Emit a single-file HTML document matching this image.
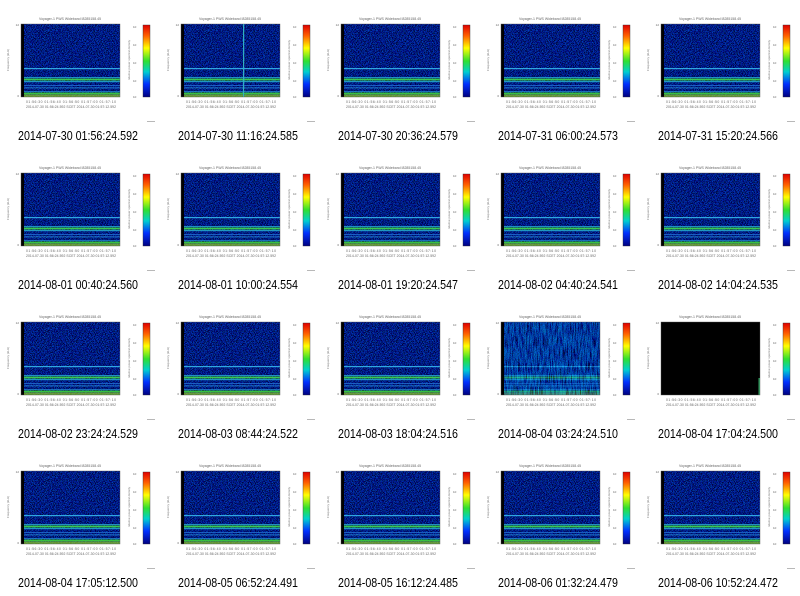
<!DOCTYPE html>
<html><head><meta charset="utf-8"><style>html,body{margin:0;padding:0;background:#fff;}svg{display:block}</style></head>
<body>
<svg width="800" height="596" viewBox="0 0 800 596" xmlns="http://www.w3.org/2000/svg">
<defs>
<filter id="nz" x="0" y="0" width="100%" height="100%">
<feTurbulence type="fractalNoise" baseFrequency="1.3" numOctaves="2" seed="3"/>
<feColorMatrix type="matrix" values="0 0 0 0 0  0.9 0 0 0 -0.45  3.2 0 0 0 -1.2  0 0 0 0 1"/>
</filter>
<filter id="nz2" x="0" y="0" width="100%" height="100%">
<feTurbulence type="fractalNoise" baseFrequency="1.2 0.08" numOctaves="2" seed="7"/>
<feColorMatrix type="matrix" values="0 0 0 0 0  1.6 0 0 0 -0.65  3 0 0 0 -0.9  0 0 0 0 1"/>
</filter>
<linearGradient id="cb" x1="0" y1="0" x2="0" y2="1">
<stop offset="0" stop-color="#e00000"/><stop offset="0.15" stop-color="#ff6000"/>
<stop offset="0.32" stop-color="#ffff00"/><stop offset="0.5" stop-color="#30e030"/>
<stop offset="0.65" stop-color="#00d0d0"/><stop offset="0.82" stop-color="#0030ff"/>
<stop offset="1" stop-color="#000080"/></linearGradient>
<g id="spec">
<rect width="99" height="73" fill="#020a58"/>
<rect width="99" height="73" filter="url(#nz)" opacity="0.65"/>
<rect x="0" y="44" width="99" height="1.2" fill="#30a8e0"/>
<rect x="0" y="53" width="99" height="1" fill="#2090c0"/>
<rect x="0" y="54.5" width="99" height="2" fill="#38c850"/>
<rect x="0" y="57" width="99" height="1.2" fill="#2098c0"/>
<rect x="0" y="61" width="99" height="0.8" fill="#2070d0"/>
<rect x="0" y="63.5" width="99" height="0.8" fill="#2890d8"/>
<rect x="0" y="67" width="99" height="0.8" fill="#2080c8"/>
<rect x="0" y="68.5" width="99" height="1.8" fill="#38c040"/>
<rect x="0" y="70.5" width="99" height="2.5" fill="#90d020" opacity="0.7"/>
<rect x="0" y="0" width="3" height="73" fill="#000"/>
</g>
<g id="frame">
<rect x="21" y="24" width="99" height="73" fill="none" stroke="#555" stroke-width="0.4"/>
<text x="70" y="20" font-size="3.5" text-anchor="middle" fill="#666" font-family="Liberation Sans, sans-serif">Voyager-1 PWS Wideband I8285158.45</text>
<text x="19" y="26" font-size="3" fill="#666" text-anchor="end" font-family="Liberation Sans">12</text>
<text x="19" y="97" font-size="3" fill="#666" text-anchor="end" font-family="Liberation Sans">0</text>
<text x="26" y="103" font-size="3.4" fill="#666" font-family="Liberation Sans" textLength="90" lengthAdjust="spacing">01:56:30   01:56:40   01:56:50   01:57:00   01:57:10</text>
<text x="26" y="108" font-size="3.4" fill="#666" font-family="Liberation Sans" textLength="90" lengthAdjust="spacing">2014-07-30 01:56:24.592   SCET   2014-07-30 01:57:12.592</text>
<rect x="143" y="25" width="7" height="72" fill="url(#cb)" stroke="#333" stroke-width="0.4"/>
<text x="133" y="28" font-size="3" fill="#666" font-family="Liberation Sans">10</text>
<text x="133" y="46" font-size="3" fill="#666" font-family="Liberation Sans">10</text>
<text x="133" y="64" font-size="3" fill="#666" font-family="Liberation Sans">10</text>
<text x="133" y="82" font-size="3" fill="#666" font-family="Liberation Sans">10</text>
<text x="133" y="98" font-size="3" fill="#666" font-family="Liberation Sans">10</text>
<rect x="147" y="121" width="8" height="0.6" fill="#888"/>
<text transform="translate(9,60) rotate(-90)" font-size="3" fill="#777" text-anchor="middle" font-family="Liberation Sans">Frequency (kHz)</text>
<text transform="translate(130,60) rotate(-90)" font-size="3" fill="#777" text-anchor="middle" font-family="Liberation Sans">relative power spectral density</text>
</g>
</defs>
<g font-family="Liberation Sans, sans-serif" font-size="13" fill="#000">
<g transform="translate(0,0)"><use href="#spec" x="21" y="24"/><use href="#frame"/><text x="18" y="140" textLength="120" lengthAdjust="spacingAndGlyphs">2014-07-30 01:56:24.592</text></g>
<g transform="translate(160,0)"><use href="#spec" x="21" y="24"/><rect x="83" y="24" width="1.2" height="73" fill="#30b0c0"/><use href="#frame"/><text x="18" y="140" textLength="120" lengthAdjust="spacingAndGlyphs">2014-07-30 11:16:24.585</text></g>
<g transform="translate(320,0)"><use href="#spec" x="21" y="24"/><use href="#frame"/><text x="18" y="140" textLength="120" lengthAdjust="spacingAndGlyphs">2014-07-30 20:36:24.579</text></g>
<g transform="translate(480,0)"><use href="#spec" x="21" y="24"/><use href="#frame"/><text x="18" y="140" textLength="120" lengthAdjust="spacingAndGlyphs">2014-07-31 06:00:24.573</text></g>
<g transform="translate(640,0)"><use href="#spec" x="21" y="24"/><use href="#frame"/><text x="18" y="140" textLength="120" lengthAdjust="spacingAndGlyphs">2014-07-31 15:20:24.566</text></g>
<g transform="translate(0,149)"><use href="#spec" x="21" y="24"/><use href="#frame"/><text x="18" y="140" textLength="120" lengthAdjust="spacingAndGlyphs">2014-08-01 00:40:24.560</text></g>
<g transform="translate(160,149)"><use href="#spec" x="21" y="24"/><use href="#frame"/><text x="18" y="140" textLength="120" lengthAdjust="spacingAndGlyphs">2014-08-01 10:00:24.554</text></g>
<g transform="translate(320,149)"><use href="#spec" x="21" y="24"/><use href="#frame"/><text x="18" y="140" textLength="120" lengthAdjust="spacingAndGlyphs">2014-08-01 19:20:24.547</text></g>
<g transform="translate(480,149)"><use href="#spec" x="21" y="24"/><use href="#frame"/><text x="18" y="140" textLength="120" lengthAdjust="spacingAndGlyphs">2014-08-02 04:40:24.541</text></g>
<g transform="translate(640,149)"><use href="#spec" x="21" y="24"/><use href="#frame"/><text x="18" y="140" textLength="120" lengthAdjust="spacingAndGlyphs">2014-08-02 14:04:24.535</text></g>
<g transform="translate(0,298)"><use href="#spec" x="21" y="24"/><use href="#frame"/><text x="18" y="140" textLength="120" lengthAdjust="spacingAndGlyphs">2014-08-02 23:24:24.529</text></g>
<g transform="translate(160,298)"><use href="#spec" x="21" y="24"/><use href="#frame"/><text x="18" y="140" textLength="120" lengthAdjust="spacingAndGlyphs">2014-08-03 08:44:24.522</text></g>
<g transform="translate(320,298)"><use href="#spec" x="21" y="24"/><use href="#frame"/><text x="18" y="140" textLength="120" lengthAdjust="spacingAndGlyphs">2014-08-03 18:04:24.516</text></g>
<g transform="translate(480,298)"><use href="#spec" x="21" y="24"/><rect x="24" y="24" width="96" height="73" filter="url(#nz2)" opacity="0.45"/><use href="#frame"/><text x="18" y="140" textLength="120" lengthAdjust="spacingAndGlyphs">2014-08-04 03:24:24.510</text></g>
<g transform="translate(640,298)"><rect x="21" y="24" width="99" height="73" fill="#000"/><rect x="118.5" y="80" width="1.5" height="17" fill="#30a060"/><use href="#frame"/><text x="18" y="140" textLength="120" lengthAdjust="spacingAndGlyphs">2014-08-04 17:04:24.500</text></g>
<g transform="translate(0,447)"><use href="#spec" x="21" y="24"/><use href="#frame"/><text x="18" y="140" textLength="120" lengthAdjust="spacingAndGlyphs">2014-08-04 17:05:12.500</text></g>
<g transform="translate(160,447)"><use href="#spec" x="21" y="24"/><use href="#frame"/><text x="18" y="140" textLength="120" lengthAdjust="spacingAndGlyphs">2014-08-05 06:52:24.491</text></g>
<g transform="translate(320,447)"><use href="#spec" x="21" y="24"/><use href="#frame"/><text x="18" y="140" textLength="120" lengthAdjust="spacingAndGlyphs">2014-08-05 16:12:24.485</text></g>
<g transform="translate(480,447)"><use href="#spec" x="21" y="24"/><use href="#frame"/><text x="18" y="140" textLength="120" lengthAdjust="spacingAndGlyphs">2014-08-06 01:32:24.479</text></g>
<g transform="translate(640,447)"><use href="#spec" x="21" y="24"/><use href="#frame"/><text x="18" y="140" textLength="120" lengthAdjust="spacingAndGlyphs">2014-08-06 10:52:24.472</text></g>
</g>
</svg>
</body></html>
